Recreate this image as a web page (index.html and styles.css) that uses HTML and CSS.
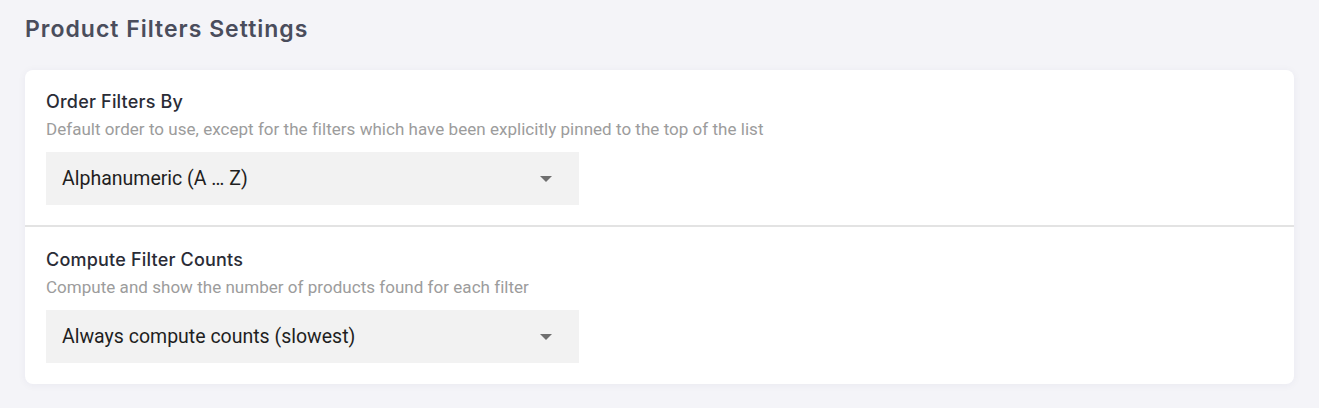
FILE: index.html
```html
<!DOCTYPE html>
<html>
<head>
<meta charset="utf-8">
<link rel="stylesheet" href="styles.css">
</head>
<body>
<div class="page">
  <h1 class="title">Product Filters Settings</h1>
  <div class="card">
    <div class="section">
      <div class="label">Order Filters By</div>
      <div class="desc">Default order to use, except for the filters which have been explicitly pinned to the top of the list</div>
      <div class="select">
        <span class="value">Alphanumeric (A … Z)</span>
        <svg class="arrow" width="12" height="6" viewBox="0 0 12 6"><path d="M0 0H12L6 6Z" fill="#6f6f6f"/></svg>
      </div>
    </div>
    <div class="section">
      <div class="label">Compute Filter Counts</div>
      <div class="desc">Compute and show the number of products found for each filter</div>
      <div class="select">
        <span class="value">Always compute counts (slowest)</span>
        <svg class="arrow" width="12" height="6" viewBox="0 0 12 6"><path d="M0 0H12L6 6Z" fill="#6f6f6f"/></svg>
      </div>
    </div>
  </div>
</div>
</body>
</html>
```
FILE: styles.css
```css
html, body {
  margin: 0;
  padding: 0;
  background: #f4f4f8;
}
.page {
  padding: 14px 25px 24px 25px;
  font-family: Inter, "Liberation Sans", sans-serif;
}
.title {
  margin: 0;
  font-size: 23px;
  font-weight: 600;
  color: #4a4d5c;
  line-height: 30px;
  letter-spacing: 1px;
}
.card {
  margin-top: 26px;
  background: #ffffff;
  border-radius: 8px;
  box-shadow: 0 1px 8px rgba(40, 40, 90, 0.05);
  overflow: hidden;
}
.section {
  padding: 21px 21px 20px 21px;
}
.section + .section {
  border-top: 2px solid #e3e3e3;
  padding-top: 22px;
  padding-bottom: 21px;
}
.label {
  font-size: 18px;
  line-height: 22px;
  font-weight: 500;
  color: #2a2c36;
  letter-spacing: 0.2px;
}
.desc {
  margin-top: 5px;
  font-family: Roboto, "Liberation Sans", sans-serif;
  font-size: 17px;
  line-height: 22px;
  color: #9c9c9c;
  letter-spacing: 0.03px;
}
.select {
  margin-top: 12px;
  width: 533px;
  height: 53px;
  box-sizing: border-box;
  background: #f2f2f2;
  display: flex;
  align-items: center;
  justify-content: space-between;
  padding: 0 27px 0 16px;
}
.value {
  font-family: Roboto, "Liberation Sans", sans-serif;
  font-size: 19.5px;
  color: #1f1f1f;
}
.arrow {
  display: block;
}
```
